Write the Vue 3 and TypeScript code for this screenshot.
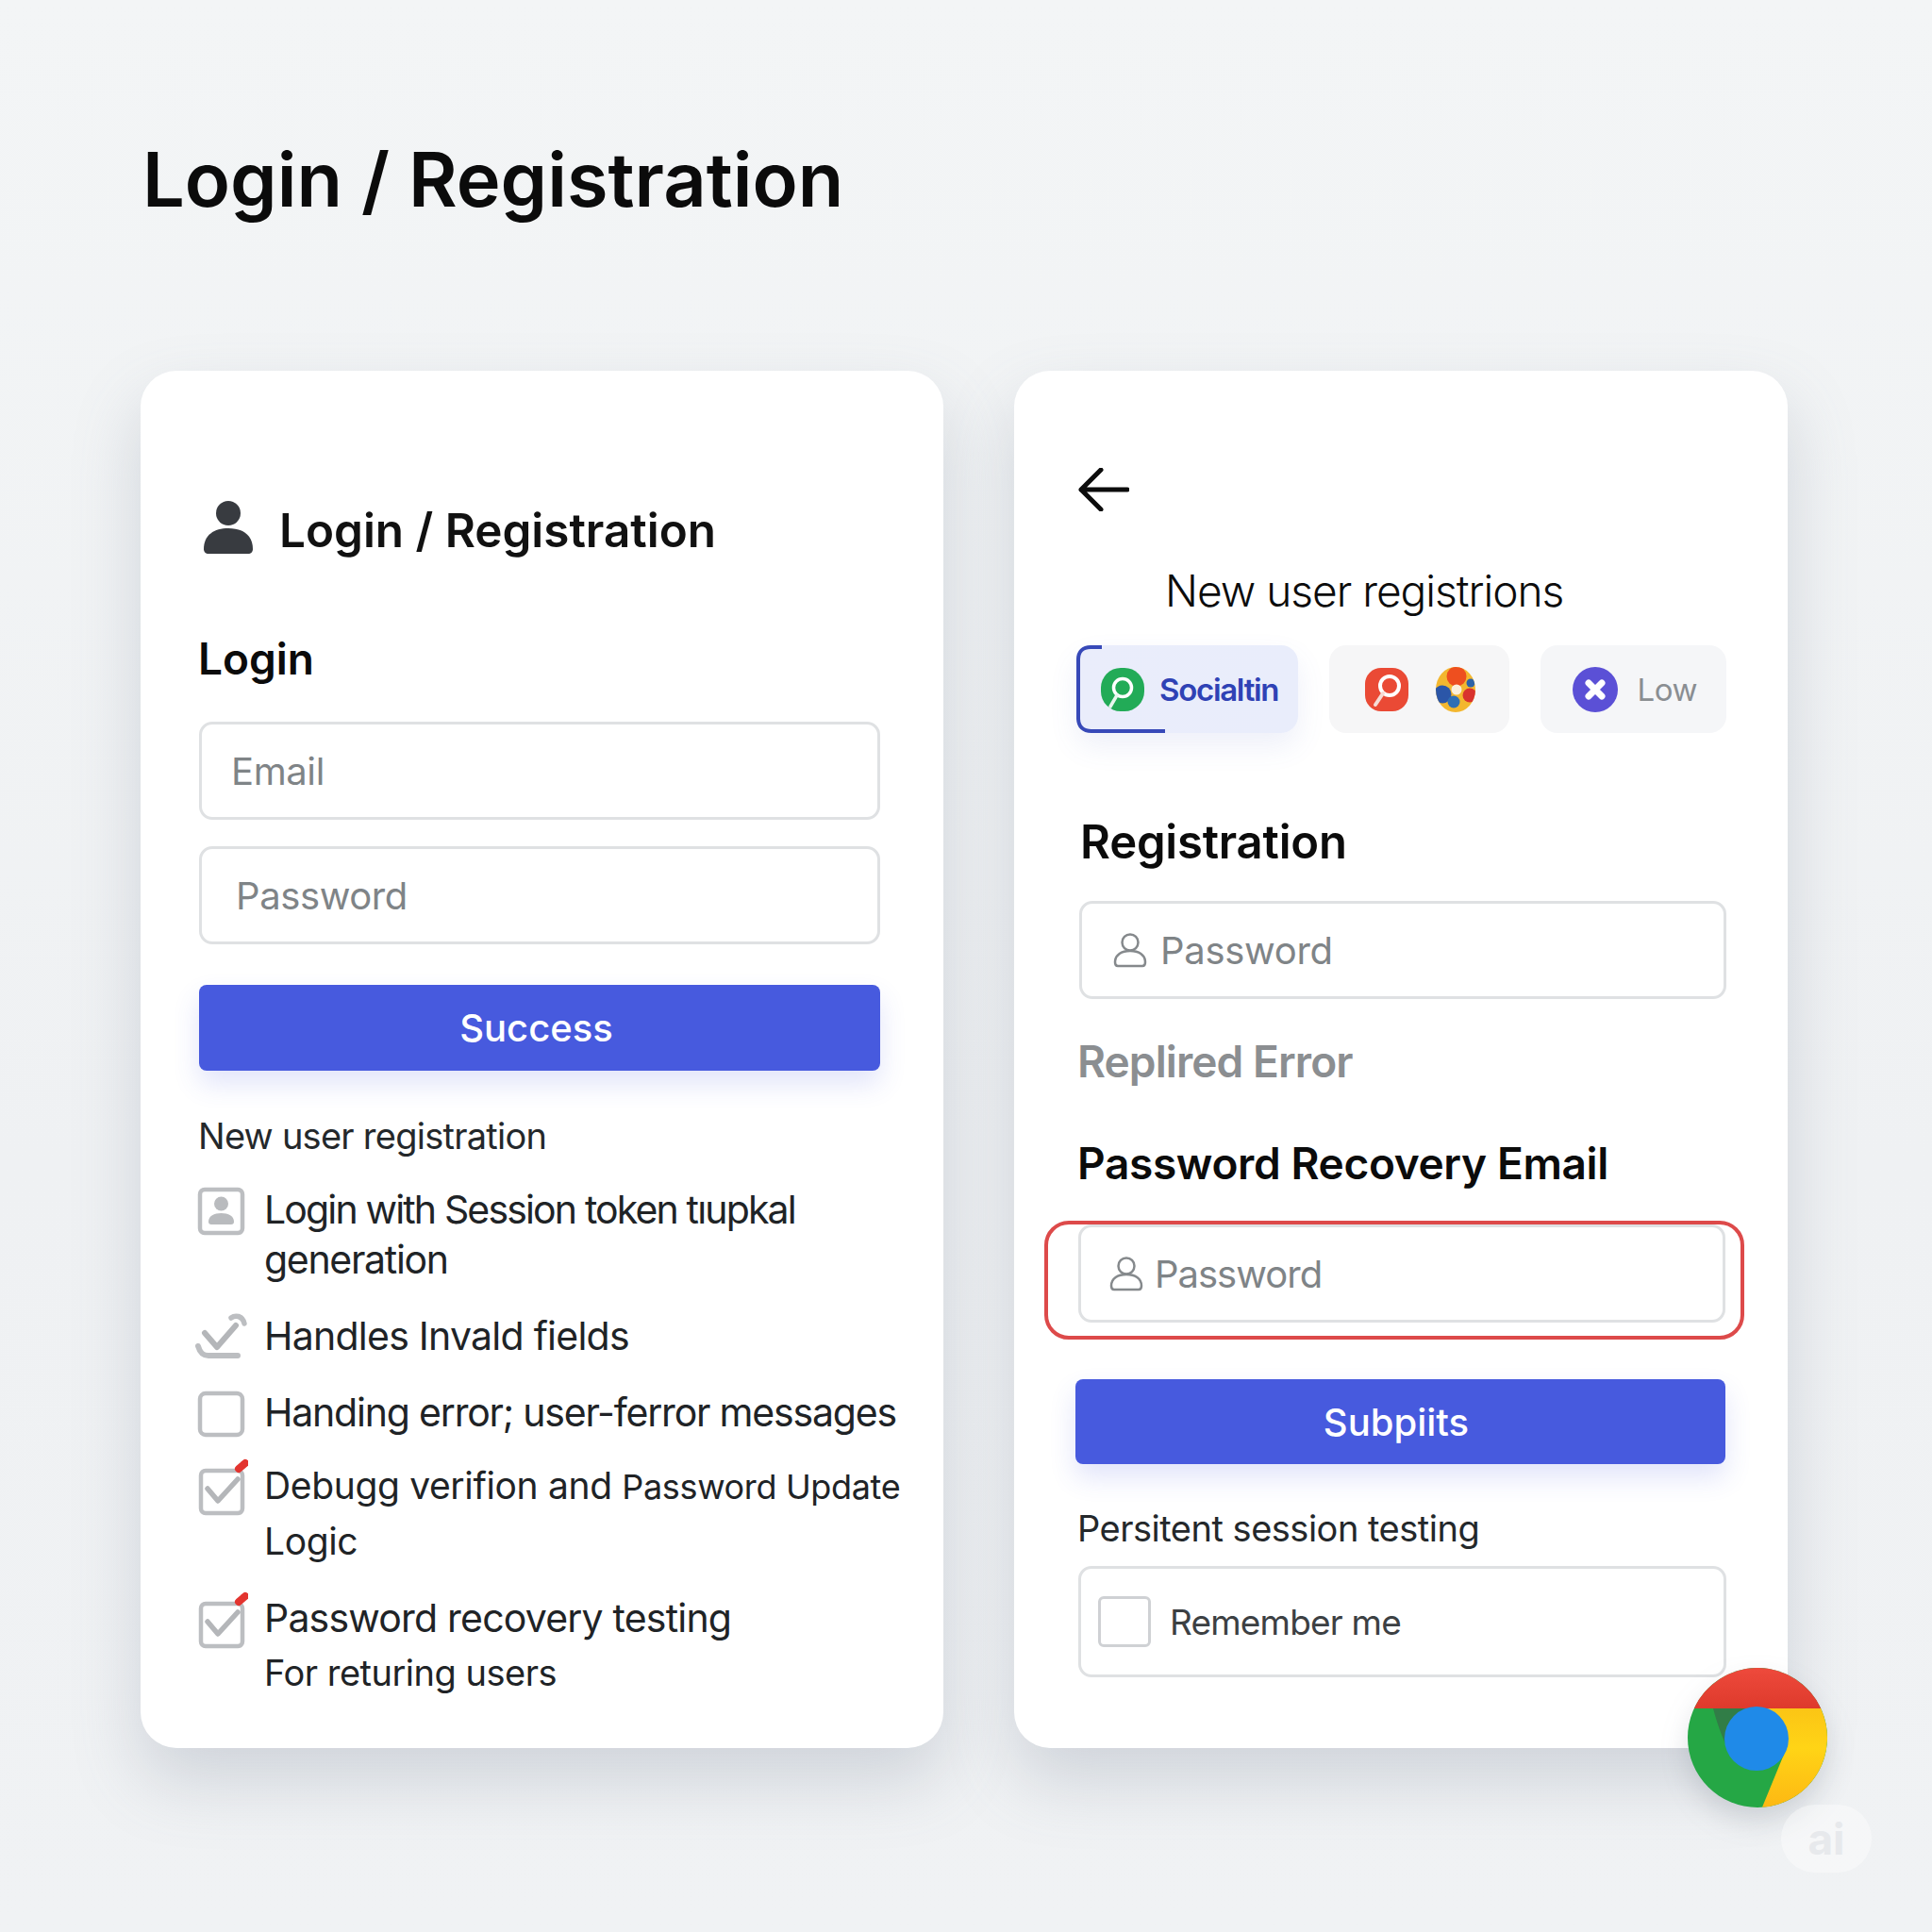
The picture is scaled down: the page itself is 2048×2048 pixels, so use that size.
<template>
  <div class="page">
    <h1 class="page-title">Login / Registration</h1>

    <div class="cards">
      <section class="card card-left">
        <div class="card-head">
          <svg class="head-icon" viewBox="0 0 56 60">
            <circle cx="28" cy="14" r="13" fill="#383b40" />
            <path d="M2 52C2 37 13 30 28 30s26 7 26 22c0 3-2 5-5 5H7c-3 0-5-2-5-5z" fill="#383b40" />
          </svg>
          <span>Login / Registration</span>
        </div>

        <h2 class="section-title login-title">Login</h2>
        <div class="field email-field">Email</div>
        <div class="field password-field">Password</div>
        <button class="primary login-btn">Success</button>

        <p class="note">New user registration</p>

        <ul class="checklist">
          <li class="row row-session">
            <svg class="row-icon" viewBox="0 0 56 62">
              <rect x="5" y="5" width="45" height="46" rx="5" fill="#fff" stroke="#bcbec1" stroke-width="4.500" />
              <circle cx="27.500" cy="20" r="7.500" fill="#b9bbbe" />
              <path d="M14 39c0-6 6-9 13.500-9S41 33 41 39c0 2-1 3-3 3H17c-2 0-3-1-3-3z" fill="#b9bbbe" />
            </svg>
            <div class="row-text">
              <span class="line-session">Login with Session token tıupkal</span><br />
              <span class="line-generation">generation</span>
            </div>
          </li>
          <li class="row row-invalid">
            <svg class="row-icon" viewBox="0 0 56 62">
              <path d="M10 23l13 15 20-23" fill="none" stroke="#b4b6b9" stroke-width="6" stroke-linecap="round" stroke-linejoin="round" />
              <path d="M38 7c4-3 12-3 14 6" fill="none" stroke="#bcbec1" stroke-width="5.500" stroke-linecap="round" />
              <path d="M3 37c2 7 5 10 11 10h31" fill="none" stroke="#bcbec1" stroke-width="6" stroke-linecap="round" />
            </svg>
            <div class="row-text line-invalid">Handles Invald fields</div>
          </li>
          <li class="row row-error">
            <svg class="row-icon" viewBox="0 0 56 62">
              <rect x="5" y="6" width="45" height="44" rx="6" fill="#fff" stroke="#bcbec1" stroke-width="4.500" />
            </svg>
            <div class="row-text line-error">Handing error; user-ferror messages</div>
          </li>
          <li class="row row-debug">
            <svg class="row-icon" viewBox="0 0 56 62">
              <rect x="6" y="13" width="44" height="45" rx="5" fill="#fff" stroke="#bcbec1" stroke-width="4.500" />
              <path d="M13 32l11 13 21-23" fill="none" stroke="#b4b6b9" stroke-width="5.500" stroke-linecap="round" stroke-linejoin="round" />
              <path d="M46 11l7-6" stroke="#e3342f" stroke-width="8" stroke-linecap="round" />
            </svg>
            <div class="row-text debug-text">
              <span class="line-debug">Debugg verifion and <small>Password Update</small></span><br />
              <span class="line-logic">Logic</span>
            </div>
          </li>
          <li class="row row-recovery">
            <svg class="row-icon" viewBox="0 0 56 62">
              <rect x="6" y="13" width="44" height="45" rx="5" fill="#fff" stroke="#bcbec1" stroke-width="4.500" />
              <path d="M13 32l11 13 21-23" fill="none" stroke="#b4b6b9" stroke-width="5.500" stroke-linecap="round" stroke-linejoin="round" />
              <path d="M46 11l7-6" stroke="#e3342f" stroke-width="8" stroke-linecap="round" />
            </svg>
            <div class="row-text">
              <span class="line-recovery">Password recovery testing</span><br />
              <span class="sub">For returing users</span>
            </div>
          </li>
        </ul>
      </section>

      <section class="card card-right">
        <svg class="back-arrow" viewBox="0 0 54 46">
          <path d="M52 23H3M24 2L3 23l21 21" fill="none" stroke="#0c0c0c" stroke-width="5" stroke-linecap="round" stroke-linejoin="round" />
        </svg>
        <p class="reg-heading">New user registrions</p>

        <div class="tabs">
          <div class="tab tab-social">
            <svg class="tab-bracket" viewBox="0 0 236 93">
              <path d="M27 2H15C7 2 2 7 2 15v62c0 9 5 14 14 14h78" fill="none" stroke="#3749b8" stroke-width="4" />
            </svg>
            <svg class="tab-icon" viewBox="0 0 48 48">
              <rect x="1" y="1" width="46" height="46" rx="21" fill="#22ab57" />
              <circle cx="24" cy="22" r="9.500" fill="none" stroke="#fff" stroke-width="3.500" />
              <path d="M18 30l-7 12" stroke="#e8f7ee" stroke-width="3.500" stroke-linecap="round" />
            </svg>
            <span class="tab-label">Socialtin</span>
          </div>
          <div class="tab tab-apps">
            <svg class="tab-icon" viewBox="0 0 48 48">
              <rect x="1" y="1" width="46" height="46" rx="17" fill="#ea4a35" />
              <circle cx="27" cy="20" r="10" fill="none" stroke="#fff" stroke-width="4" />
              <path d="M20 28l-8 12" stroke="#f6dcd6" stroke-width="4" stroke-linecap="round" />
            </svg>
            <svg class="tab-icon" viewBox="0 0 48 48">
              <clipPath id="ball"><ellipse cx="24" cy="24" rx="21" ry="24" /></clipPath>
              <g clip-path="url(#ball)">
                <rect width="48" height="48" fill="#f3b72f" />
                <circle cx="25" cy="10" r="10.500" fill="#ee4f1f" />
                <circle cx="10" cy="29" r="9.500" fill="#2b56a8" />
                <circle cx="22" cy="37" r="6.500" fill="#2f6fb5" />
                <circle cx="39" cy="30" r="7.500" fill="#d9322e" />
                <circle cx="40" cy="17" r="4.500" fill="#2c62a8" />
                <circle cx="25" cy="24" r="5.500" fill="#fbf0dc" />
              </g>
            </svg>
          </div>
          <div class="tab tab-low">
            <svg class="tab-icon" viewBox="0 0 48 48">
              <circle cx="24" cy="24" r="24" fill="#5b50d6" />
              <path d="M17 17l14 14M31 17L17 31" stroke="#fff" stroke-width="7" stroke-linecap="round" />
            </svg>
            <span class="low-label">Low</span>
          </div>
        </div>

        <h2 class="section-title reg-title">Registration</h2>
        <div class="field reg-field">
          <svg class="user-icon" viewBox="0 0 38 38">
            <circle cx="19" cy="11" r="8.500" fill="none" stroke="#85898c" stroke-width="2.500" />
            <path d="M3 32c0-8 7-12 16-12s16 4 16 12c0 2-1 4-3 4H6c-2 0-3-2-3-4z" fill="none" stroke="#85898c" stroke-width="2.500" />
          </svg>
          Password
        </div>

        <h3 class="error-title">Replired Error</h3>
        <h2 class="section-title recovery-title">Password Recovery Email</h2>

        <div class="error-box">
          <div class="field recovery-field">
            <svg class="user-icon" viewBox="0 0 38 38">
              <circle cx="19" cy="11" r="8.500" fill="none" stroke="#85898c" stroke-width="2.500" />
              <path d="M3 32c0-8 7-12 16-12s16 4 16 12c0 2-1 4-3 4H6c-2 0-3-2-3-4z" fill="none" stroke="#85898c" stroke-width="2.500" />
            </svg>
            Password
          </div>
        </div>

        <button class="primary submit-btn">Subpiits</button>

        <p class="note persist-note">Persitent session testing</p>
        <div class="field remember-field">
          <span class="remember-box"></span>
          Remember me
        </div>
      </section>
    </div>

    <svg class="chrome" viewBox="0 0 148 148">
      <defs>
        <linearGradient id="chromeYellow" x1="0" y1="0" x2="0" y2="1">
          <stop offset="0" stop-color="#fbc515" />
          <stop offset="0.4" stop-color="#ffd416" />
          <stop offset="1" stop-color="#fdb813" />
        </linearGradient>
        <linearGradient id="chromeRed" x1="0" y1="0" x2="0" y2="1">
          <stop offset="0" stop-color="#ee4a3c" />
          <stop offset="1" stop-color="#de3a2c" />
        </linearGradient>
      </defs>
      <circle cx="74" cy="74" r="74" fill="#25a745" />
      <path d="M74 43H141.200A74 74 0 0 1 79 147.800L106 82z" fill="url(#chromeYellow)" />
      <path d="M27 43H66L50 98C39 82 32 62 27 43z" fill="#317d47" />
      <path d="M6.800 43A74 74 0 0 1 141.200 43z" fill="url(#chromeRed)" />
      <circle cx="73" cy="75" r="34" fill="#1f8ae8" />
    </svg>
    <div class="ai-badge">ai</div>
  </div>
</template>

<script setup lang="ts">
// static mock of the login / registration screens
</script>

<style>
html,
body {
  margin: 0;
  background: #f1f3f5;
}
</style>

<style scoped>
.page {
  position: relative;
  width: 2048px;
  height: 2048px;
  box-sizing: border-box;
  padding: 140px 0 0 149px;
  overflow: hidden;
  font-family: Inter, "Noto Sans", sans-serif;
  color: #111;
  background: linear-gradient(180deg, #f3f5f6 0%, #eff1f3 60%, #f0f2f4 100%);
}
.page-title {
  margin: 0 0 0 2px;
  height: 100px;
  font-size: 79.300px;
  line-height: 100px;
  font-weight: 600;
  color: #0b0b0b;
}
.cards {
  display: flex;
  gap: 75px;
  margin-top: 153px;
}
.card {
  box-sizing: border-box;
  height: 1460px;
  background: #fff;
  border-radius: 38px;
  box-shadow: 0 34px 70px rgba(110, 125, 145, 0.25);
}
.card-left {
  width: 851px;
  padding: 139px 67px 0 62px;
}
.card-right {
  width: 820px;
  padding: 103px 65px 0 68px;
}

.card-head {
  display: flex;
  align-items: center;
  gap: 26px;
  height: 60px;
  font-size: 49.400px;
  font-weight: 600;
  color: #111;
}
.head-icon {
  width: 56px;
  height: 60px;
  margin-left: 3px;
  margin-top: -4px;
}
.section-title {
  margin: 0;
  font-size: 46px;
  line-height: 56px;
  font-weight: 600;
  color: #0b0b0b;
}
.login-title {
  margin: 78px 0 0 -1px;
}

.field {
  display: flex;
  align-items: center;
  box-sizing: border-box;
  height: 104px;
  border: 3px solid #dfe1e3;
  border-radius: 14px;
  background: #fff;
  font-size: 40px;
  letter-spacing: -0.4px;
  color: #7f8487;
}
.email-field {
  margin-top: 39px;
  padding-left: 31px;
}
.password-field {
  margin-top: 28px;
  padding-left: 36px;
}

.primary {
  display: block;
  width: 100%;
  height: 91px;
  border: none;
  border-radius: 8px;
  background: #475ade;
  color: #fff;
  font-family: inherit;
  font-size: 40px;
  font-weight: 500;
  box-shadow: 0 14px 28px rgba(71, 90, 222, 0.16);
}
.login-btn {
  margin-top: 43px;
  padding-right: 13px;
}

.note {
  margin: 44px 0 0 -1px;
  font-size: 38px;
  line-height: 50px;
  letter-spacing: -0.75px;
  color: #24282b;
}

.checklist {
  margin: 27px 0 0;
  padding: 0;
  list-style: none;
}
.row {
  display: flex;
  gap: 17px;
  white-space: nowrap;
}
.row-icon {
  flex: none;
  width: 56px;
  height: 62px;
  margin: 0 0 -20px -4px;
}
.row-text {
  font-size: 41px;
  line-height: 53px;
  color: #202326;
}
.line-session {
  letter-spacing: -1.85px;
}
.line-generation {
  letter-spacing: -1.3px;
}
.line-invalid {
  letter-spacing: -0.75px;
}
.line-error {
  letter-spacing: -1.2px;
}
.line-debug {
  letter-spacing: -0.35px;
}
.line-logic {
  letter-spacing: -0.4px;
}
.line-recovery {
  letter-spacing: -0.8px;
}
.row-invalid {
  margin-top: 28px;
}
.row-error {
  margin-top: 28px;
}
.row-debug {
  margin-top: 22px;
}
.row-debug .row-text {
  font-size: 39px;
  line-height: 58px;
}
.row-debug small {
  font-size: 36px;
}
.row-recovery {
  margin-top: 24px;
}
.row-recovery .row-text {
  line-height: 57px;
}
.sub {
  font-size: 38px;
  letter-spacing: -0.5px;
}

.back-arrow {
  display: block;
  width: 54px;
  height: 46px;
}
.reg-heading {
  margin: 56px 0 0 92px;
  font-size: 46px;
  line-height: 56px;
  font-weight: 300;
  letter-spacing: -1px;
  color: #0c0c0c;
}

.tabs {
  display: flex;
  gap: 33px;
  margin: 30px 0 0 -2px;
}
.tab {
  position: relative;
  display: flex;
  align-items: center;
  box-sizing: border-box;
  height: 93px;
  border-radius: 18px;
  background: #f6f6f7;
}
.tab-social {
  width: 237px;
  padding-left: 25px;
  gap: 15px;
  background: linear-gradient(90deg, #eaedfb 0%, #e9edfb 100%);
  box-shadow: 0 14px 30px rgba(90, 110, 200, 0.1);
}
.tab-bracket {
  position: absolute;
  left: 0;
  top: 0;
  width: 236px;
  height: 93px;
}
.tab-apps {
  width: 192px;
  padding-left: 37px;
  gap: 25px;
}
.tab-low {
  width: 199px;
  padding-left: 34px;
  gap: 21px;
  background: #f5f6f8;
}
.tab-icon {
  width: 48px;
  height: 48px;
  flex: none;
}
.tab-label {
  font-size: 33px;
  font-weight: 600;
  letter-spacing: -1.3px;
  color: #2f42b5;
}
.low-label {
  font-size: 33px;
  letter-spacing: -0.4px;
  color: #8a8e92;
}

.reg-title {
  margin: 88px 0 0 2px;
  font-size: 49px;
  letter-spacing: -0.2px;
}
.reg-field {
  margin: 34px 0 0 1px;
  padding-left: 32px;
  gap: 13px;
  letter-spacing: -0.3px;
}
.user-icon {
  width: 38px;
  height: 38px;
  flex: none;
}
.error-title {
  margin: 38px 0 0 -1px;
  font-size: 46px;
  line-height: 56px;
  font-weight: 600;
  letter-spacing: -0.9px;
  color: #8b8e91;
}
.recovery-title {
  margin: 52px 0 0 -1px;
  font-size: 46px;
  letter-spacing: -0.35px;
}
.error-box {
  box-sizing: border-box;
  width: 742px;
  height: 126px;
  margin: 33px 0 0 -36px;
  padding: 0 0 0 32px;
  border: 4px solid #dd4a4a;
  border-radius: 26px;
}
.recovery-field {
  width: 686px;
  height: 104px;
  padding-left: 29px;
  gap: 11px;
  letter-spacing: -1px;
}
.submit-btn {
  width: 689px;
  height: 90px;
  margin: 42px 0 0 -3px;
  padding-right: 15px;
}
.persist-note {
  margin-top: 43px;
  letter-spacing: -0.5px;
}
.remember-field {
  height: 118px;
  margin: 15px 0 0;
  padding-left: 18px;
  gap: 20px;
  font-size: 37px;
  letter-spacing: -0.8px;
  color: #3c4043;
}
.remember-box {
  box-sizing: border-box;
  width: 56px;
  height: 54px;
  border: 3px solid #cfd1d4;
  border-radius: 6px;
}

.chrome {
  position: absolute;
  left: 1789px;
  top: 1768px;
  width: 148px;
  height: 148px;
  filter: drop-shadow(0 14px 14px rgba(90, 100, 115, 0.2));
}
.ai-badge {
  position: absolute;
  left: 1888px;
  top: 1913px;
  width: 96px;
  height: 72px;
  border-radius: 36px;
  background: rgba(255, 255, 255, 0.4);
  color: #e7e9ec;
  font-size: 46px;
  font-weight: 700;
  line-height: 72px;
  text-align: center;
}
</style>
